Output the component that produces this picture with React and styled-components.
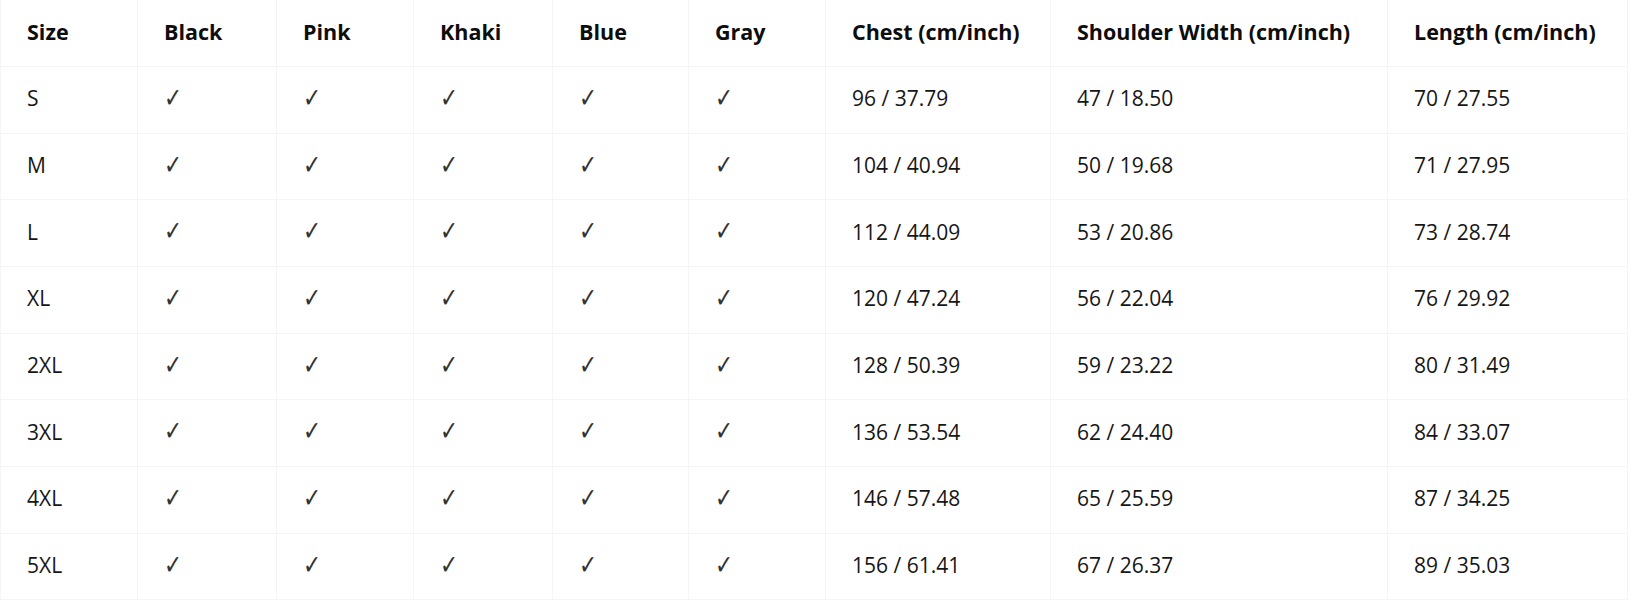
import React from "react";
import styled, { createGlobalStyle } from "styled-components";

// page reset
const GlobalStyle = createGlobalStyle`
  html, body {
    margin: 0;
    padding: 0;
    background: #ffffff;
  }
  body {
    font-family: "Open Sans", "Noto Sans", "Liberation Sans", sans-serif;
    color: #111111;
  }
`;

const columns = [
  { label: "Size", width: 137 },
  { label: "Black", width: 139 },
  { label: "Pink", width: 137 },
  { label: "Khaki", width: 139 },
  { label: "Blue", width: 136 },
  { label: "Gray", width: 137 },
  { label: "Chest (cm/inch)", width: 225 },
  { label: "Shoulder Width (cm/inch)", width: 337 },
  { label: "Length (cm/inch)", width: 240 },
];

const rows = [
  ["S", "96 / 37.79", "47 / 18.50", "70 / 27.55"],
  ["M", "104 / 40.94", "50 / 19.68", "71 / 27.95"],
  ["L", "112 / 44.09", "53 / 20.86", "73 / 28.74"],
  ["XL", "120 / 47.24", "56 / 22.04", "76 / 29.92"],
  ["2XL", "128 / 50.39", "59 / 23.22", "80 / 31.49"],
  ["3XL", "136 / 53.54", "62 / 24.40", "84 / 33.07"],
  ["4XL", "146 / 57.48", "65 / 25.59", "87 / 34.25"],
  ["5XL", "156 / 61.41", "67 / 26.37", "89 / 35.03"],
];

const App = () => {
  return (
    <>
      <GlobalStyle />
      <Wrapper>
        <Table>
          <colgroup>
            {columns.map((c) => (
              <col key={c.label} style={{ width: c.width }} />
            ))}
          </colgroup>
          <thead>
            <Row>
              {columns.map((c) => (
                <HeadCell key={c.label}>{c.label}</HeadCell>
              ))}
            </Row>
          </thead>
          <tbody>
            {rows.map(([size, chest, shoulder, length]) => (
              <Row key={size}>
                <Cell>{size}</Cell>
                {[0, 1, 2, 3, 4].map((i) => (
                  <Cell key={i}>
                    <Check>✓</Check>
                  </Cell>
                ))}
                <Cell>{chest}</Cell>
                <Cell>{shoulder}</Cell>
                <Cell>{length}</Cell>
              </Row>
            ))}
          </tbody>
        </Table>
      </Wrapper>
    </>
  );
};

export default App;

// table styles
const Wrapper = styled.div`
  width: 1634px;
  height: 600px;
  overflow: hidden;
`;

const Table = styled.table`
  width: 1627px;
  table-layout: fixed;
  border-collapse: collapse;
`;

const Row = styled.tr`
  height: 66.67px;
`;

const HeadCell = styled.th`
  text-align: left;
  padding: 0 0 3px 26px;
  font-size: 21.5px;
  font-weight: 700;
  color: #0d0d0d;
  border: 1px solid #f5f5f5;
  border-top: none;
  white-space: nowrap;
`;

const Cell = styled.td`
  text-align: left;
  padding: 0 0 3px 26px;
  font-size: 21px;
  font-weight: 400;
  color: #161616;
  border: 1px solid #f5f5f5;
  white-space: nowrap;
`;

const Check = styled.span`
  display: inline-block;
  font-family: "DejaVu Sans", sans-serif;
  font-size: 27px;
  line-height: 1;
  color: #333333;
  transform: scaleX(0.8);
  transform-origin: left center;
`;
